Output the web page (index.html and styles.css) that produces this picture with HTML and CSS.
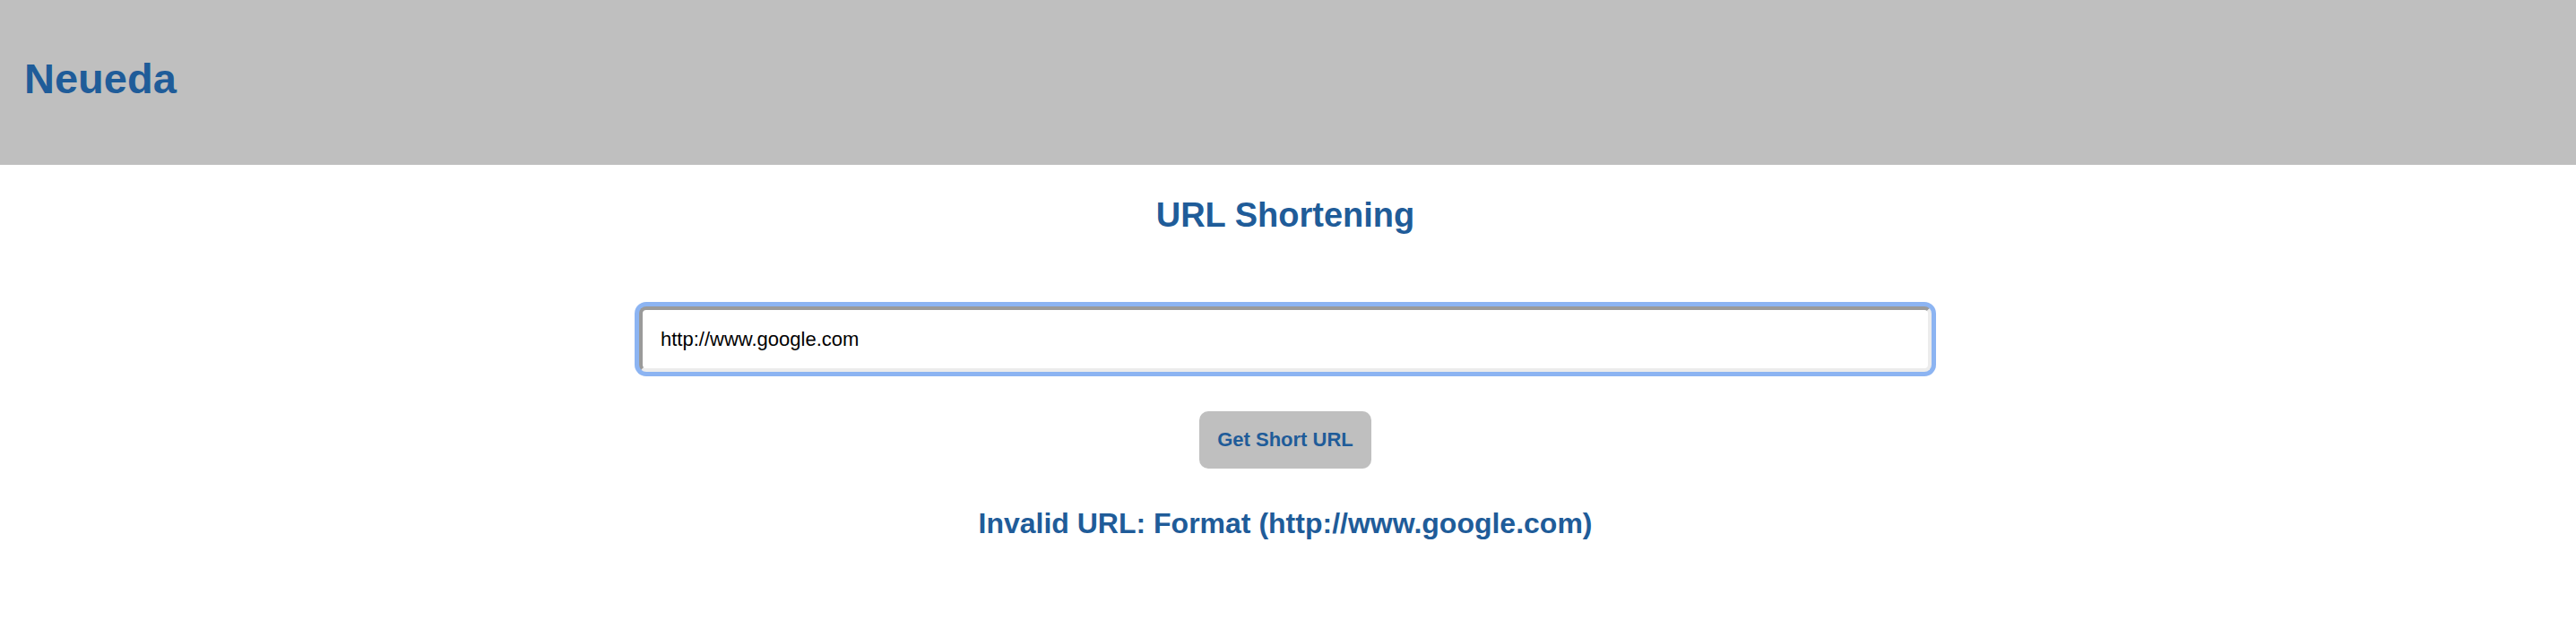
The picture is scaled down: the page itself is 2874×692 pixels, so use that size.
FILE: index.html
```html
<!DOCTYPE html>
<html lang="en">
<head>
<meta charset="utf-8">
<title>Neueda URL Shortening</title>
<link rel="stylesheet" href="styles.css">
</head>
<body>
<header class="topbar">
  <h1 class="brand">Neueda</h1>
</header>
<main class="content">
  <h2 class="title">URL Shortening</h2>
  <input class="url-input" type="text" value="http://www.google.com">
  <button class="short-btn" type="button">Get Short URL</button>
  <p class="message">Invalid URL: Format (http://www.google.com)</p>
</main>
</body>
</html>
```
FILE: styles.css
```css
html, body {
  margin: 0;
  padding: 0;
  background: #ffffff;
  font-family: "Liberation Sans", Arial, sans-serif;
}

.topbar {
  box-sizing: border-box;
  height: 184px;
  background: #bfbfbf;
  padding: 61px 0 0 27px;
}

.brand {
  margin: 0;
  font-size: 47px;
  font-weight: bold;
  color: #1f5c99;
  line-height: 54px;
}

.content {
  display: flex;
  flex-direction: column;
  align-items: center;
  padding: 35px 6px 0 0;
}

.title {
  margin: 0;
  font-size: 38px;
  font-weight: bold;
  color: #1f5c99;
  line-height: 43px;
}

.url-input {
  box-sizing: border-box;
  margin-top: 80px;
  width: 1442px;
  height: 73px;
  padding: 0 20px;
  border: 4px solid;
  border-color: #9a9a9a #ececec #ececec #9a9a9a;
  border-radius: 8px;
  box-shadow: 0 0 0 5px #8cb4f2;
  outline: none;
  font-family: "Liberation Sans", Arial, sans-serif;
  font-size: 22px;
  color: #000000;
  background: #ffffff;
}

.short-btn {
  box-sizing: border-box;
  margin-top: 44px;
  height: 64px;
  padding: 0 20px;
  border: none;
  border-radius: 10px;
  background: #bfbfbf;
  font-family: "Liberation Sans", Arial, sans-serif;
  font-size: 22px;
  font-weight: bold;
  color: #1f5c99;
}

.message {
  margin: 43px 0 0 0;
  font-size: 32px;
  font-weight: bold;
  color: #1f5c99;
  line-height: 37px;
}
```
